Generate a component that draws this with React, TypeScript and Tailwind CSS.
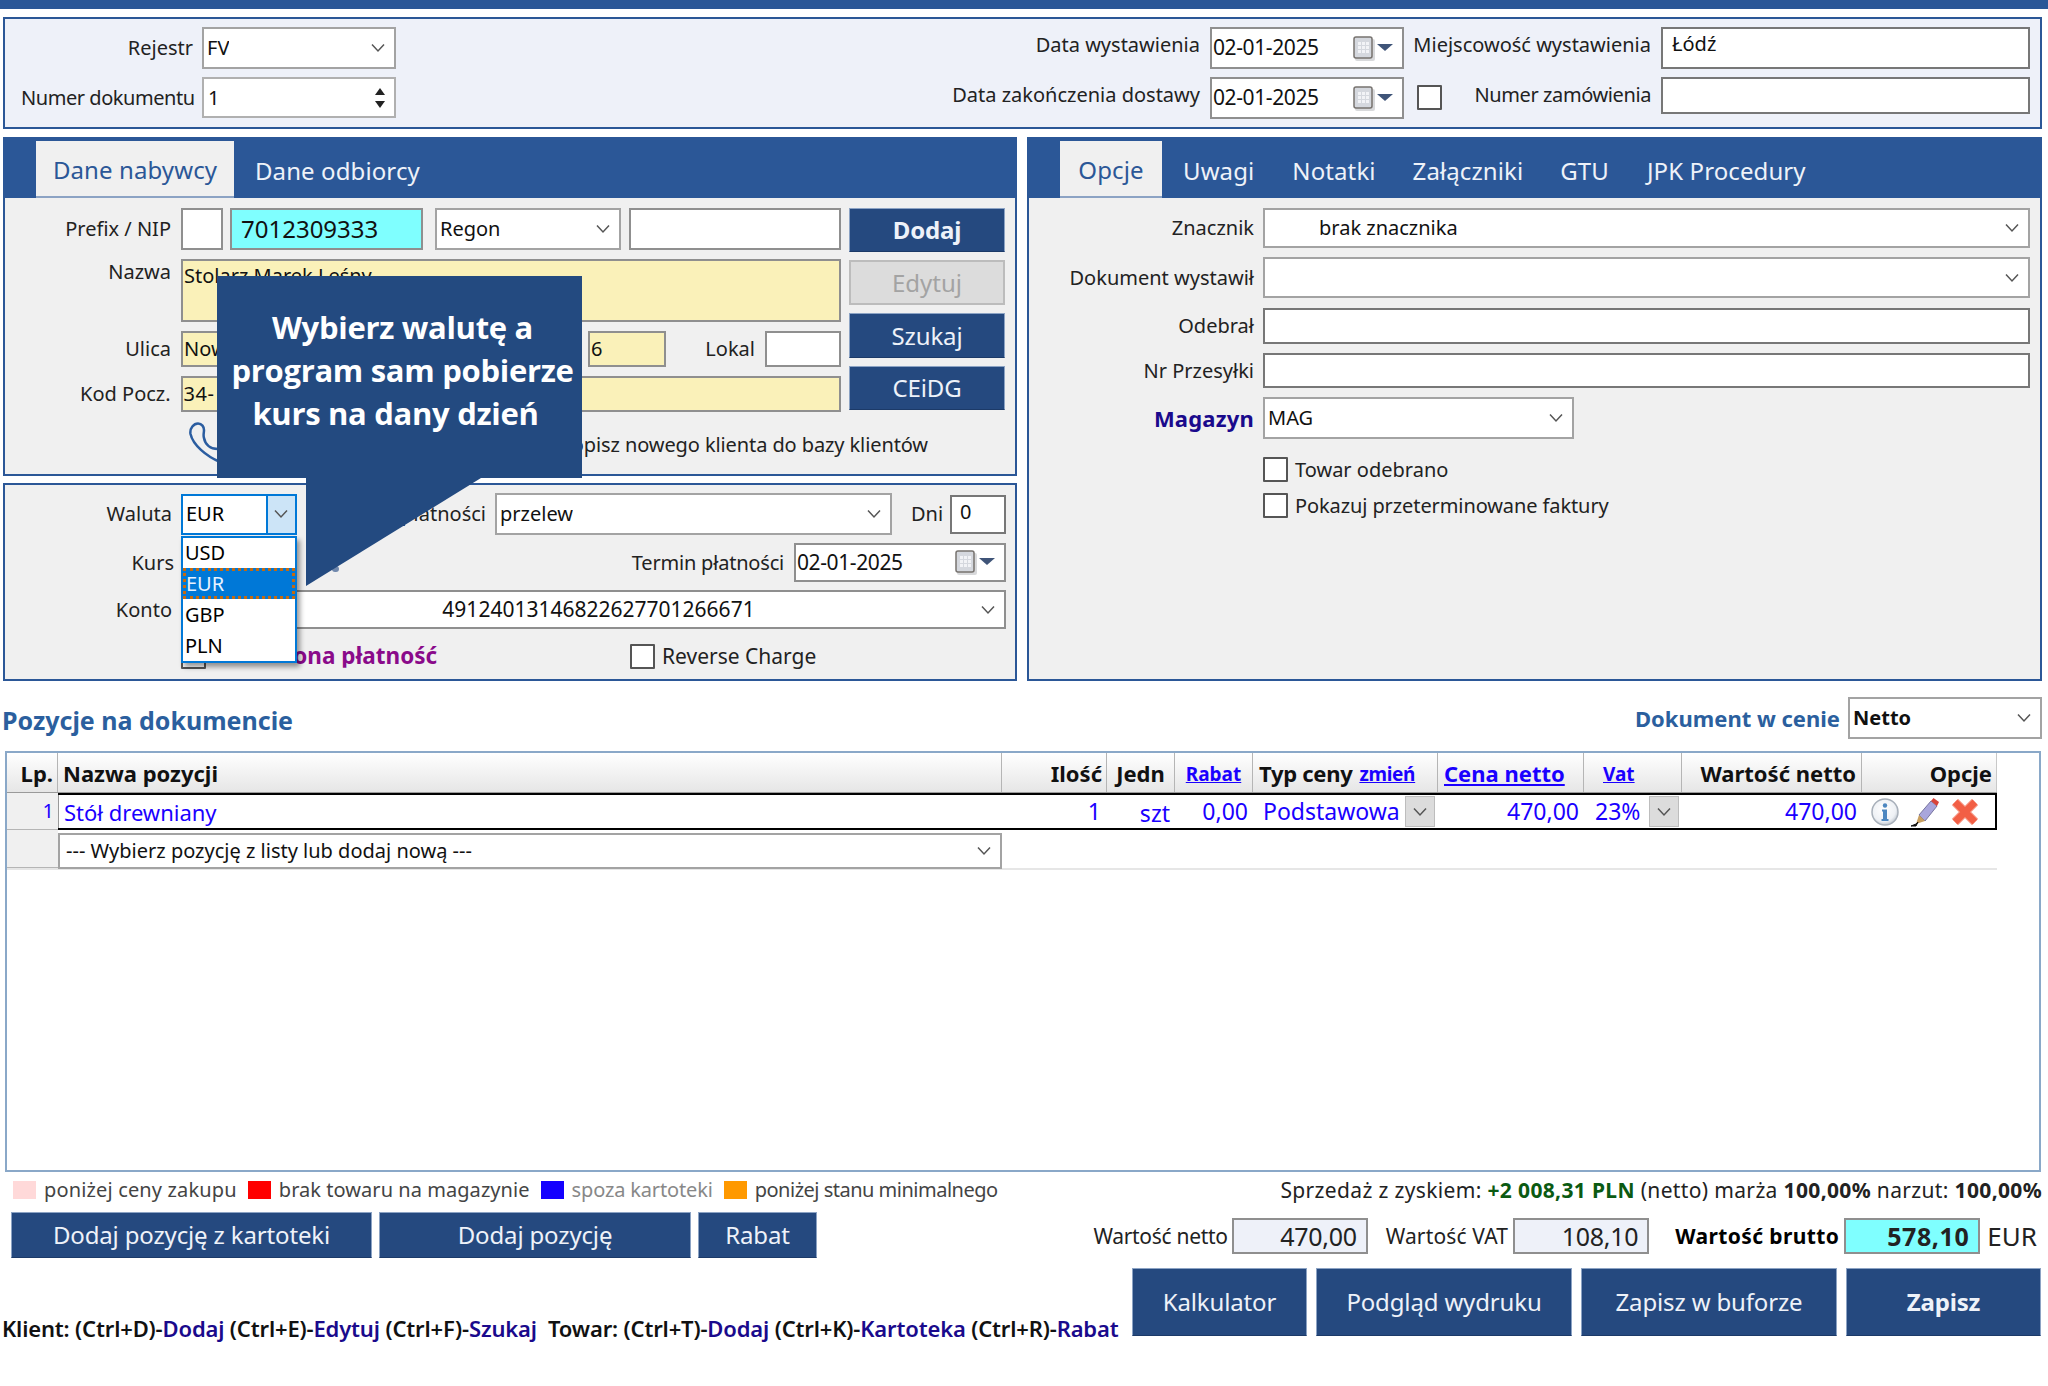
import type { ReactNode } from "react";

const labelCls = "text-[20px] leading-none text-[#222] text-right whitespace-nowrap";
const boxCls = "border-2 border-[#8f8f8f] bg-white flex items-center text-[20px] text-[#111] whitespace-nowrap overflow-hidden";
const btnCls = "bg-[#25497f] border border-[#8ca3c4] border-b-[#1c3a68] text-[#eef2f9] flex items-center justify-center text-[24px] tracking-[-0.15px] whitespace-nowrap";

function Chevron({ className = "" }: { className?: string }) {
  return (
    <svg width="16" height="10" viewBox="0 0 16 10" className={className} fill="none" stroke="#555" strokeWidth="1.5">
      <path d="M2 1.5 L8 8 L14 1.5" />
    </svg>
  );
}

function CalendarIcon() {
  return (
    <svg width="40" height="25" viewBox="0 0 40 25" className="shrink-0">
      <rect x="2" y="3" width="20" height="22" rx="2" fill="#8f9298" opacity="0.35" />
      <rect x="1" y="1" width="18" height="21" rx="2" fill="#d5d8de" stroke="#77736f" strokeWidth="1.5" />
      <path d="M5 6h3v3H5zM9 6h3v3H9zM13 6h3v3h-3zM5 10h3v3H5zM9 10h3v3H9zM13 10h3v3h-3zM5 14h3v3H5zM9 14h3v3H9zM13 14h3v3h-3z" fill="#f2f3f6" />
      <path d="M24 8h16l-8 7z" fill="#3f5478" />
    </svg>
  );
}

function PhoneIcon() {
  return (
    <svg width="36" height="42" viewBox="0 0 36 42" fill="none" stroke="#2b5da0" strokeWidth="2.5" className="shrink-0">
      <path d="M31 40 C17 34 4 23 1.500 12 C0.500 6 5 1.500 9 1.500 C13 1.500 15 5 15 8 C15 11 14 13 15 16 C16 22 21 28 31 27" />
    </svg>
  );
}

function Select({ className, children }: { className: string; children?: ReactNode }) {
  return (
    <div className={`${boxCls} border-[#a3a3a3] justify-between pl-[3px] pr-[8px] ${className}`}>
      <span className="truncate">{children}</span>
      <Chevron className="shrink-0" />
    </div>
  );
}

function DateInput({ className }: { className: string }) {
  return (
    <div className={`${boxCls} justify-between pl-[1px] pr-[9px] ${className}`}>
      <span className="text-[21px] tracking-[-0.4px]">02-01-2025</span>
      <CalendarIcon />
    </div>
  );
}

function Check({ className = "" }: { className?: string }) {
  return <div className={`w-[25px] h-[25px] border-2 border-[#555] bg-white rounded-[1px] shrink-0 ${className}`} />;
}

function TabBar({ tabs }: { tabs: { name: string; className: string }[] }) {
  return (
    <div className="h-[59px] bg-[#2b5797] flex items-end pl-[31px] text-[24px] tracking-[0.1px] leading-none">
      {tabs.map((tab, i) => (
        <div
          key={tab.name}
          className={`h-[57px] flex items-center pt-[2px] whitespace-nowrap ${
            i === 0 ? "bg-[#f0f0f0] text-[#2b5797] justify-center border-b-2 border-b-[#8ca3c4]" : "text-[#eef2f9]"
          } ${tab.className}`}
        >
          {tab.name}
        </div>
      ))}
    </div>
  );
}

function TopPanel() {
  return (
    <div className="ml-[3px] mt-[8px] w-[2039px] h-[112px] border-2 border-[#2b5797] bg-[#eef1f9] flex justify-between pt-[8px] pl-[16px] pr-[10px]">
      <div className="flex flex-col gap-[8px]">
        <div className="flex items-center gap-[9px]">
          <div className={`${labelCls} w-[172px]`}>Rejestr</div>
          <Select className="w-[194px] h-[42px]">FV</Select>
        </div>
        <div className="flex items-center gap-[9px]">
          <div className={`${labelCls} w-[172px] tracking-[-0.45px]`}>Numer dokumentu</div>
          <div className={`${boxCls} border-[#b0b0b0] w-[194px] h-[41px] justify-between pl-[4px] pr-[9px]`}>
            <span>1</span>
            <div className="flex flex-col gap-[6px]">
              <div className="w-0 h-0 border-x-[5px] border-x-transparent border-b-[7px] border-b-[#222]" />
              <div className="w-0 h-0 border-x-[5px] border-x-transparent border-t-[7px] border-t-[#222]" />
            </div>
          </div>
        </div>
      </div>
      <div className="flex flex-col gap-[8px]">
        <div className="flex items-start">
          <div className={`${labelCls} pt-[8px] w-[250px]`}>Data wystawienia</div>
          <DateInput className="w-[194px] h-[42px] ml-[10px]" />
          <div className={`${labelCls} pt-[8px] w-[247px]`}>Miejscowość wystawienia</div>
          <div className={`${boxCls} border-[#777] w-[369px] h-[42px] ml-[10px] !items-start pl-[9px]`}>Łódź</div>
        </div>
        <div className="flex items-start">
          <div className={`${labelCls} pt-[8px] w-[250px]`}>Data zakończenia dostawy</div>
          <DateInput className="w-[194px] h-[42px] ml-[10px]" />
          <Check className="ml-[13px] mt-[8px]" />
          <div className={`${labelCls} pt-[8px] w-[209px] tracking-[-0.4px]`}>Numer zamówienia</div>
          <div className={`${boxCls} border-[#777] w-[369px] h-[37px] ml-[10px]`} />
        </div>
      </div>
    </div>
  );
}

function BuyerPanel() {
  return (
    <div className="h-[339px] border-2 border-[#2b5797] bg-[#f0f0f0]">
      <TabBar
        tabs={[
          { name: "Dane nabywcy", className: "w-[198px]" },
          { name: "Dane odbiorcy", className: "ml-[21px]" },
        ]}
      />
      <div className="flex pt-[10px]">
        <div className="w-[836px] flex flex-col">
          <div className="flex items-center">
            <div className={`${labelCls} w-[166px]`}>Prefix / NIP</div>
            <div className={`${boxCls} ml-[10px] w-[42px] h-[42px]`} />
            <div className={`${boxCls} ml-[7px] w-[193px] h-[42px] !bg-[#7fffff] pl-[9px] !text-[24px]`}>7012309333</div>
            <Select className="ml-[12px] w-[186px] h-[42px]">Regon</Select>
            <div className={`${boxCls} ml-[8px] w-[212px] h-[42px]`} />
          </div>
          <div className="flex mt-[9px]">
            <div className={`${labelCls} w-[166px] pt-[3px]`}>Nazwa</div>
            <div className={`${boxCls} ml-[10px] w-[660px] h-[63px] !bg-[#faf1b9] !items-start pl-[1px]`}>Stolarz Marek Leśny</div>
          </div>
          <div className="flex items-center mt-[9px]">
            <div className={`${labelCls} w-[166px]`}>Ulica</div>
            <div className={`${boxCls} ml-[10px] w-[380px] h-[36px] !bg-[#faf1b9] pl-[1px]`}>Nowa</div>
            <div className={`${boxCls} ml-[27px] w-[78px] h-[36px] !bg-[#faf1b9] pl-[1px]`}>6</div>
            <div className={`${labelCls} w-[89px]`}>Lokal</div>
            <div className={`${boxCls} ml-[10px] w-[76px] h-[36px]`} />
          </div>
          <div className="flex items-center mt-[9px]">
            <div className={`${labelCls} w-[166px]`}>Kod Pocz.</div>
            <div className={`${boxCls} ml-[10px] w-[80px] h-[36px] !bg-[#faf1b9] pl-[1px] tracking-[0.5px]`}>34-</div>
            <div className={`${boxCls} ml-[8px] w-[574px] h-[36px] !bg-[#faf1b9]`} />
          </div>
        </div>
        <div className="ml-[8px] w-[156px] flex flex-col gap-[8px]">
          <div className={`${btnCls} h-[44px] font-bold`}>Dodaj</div>
          <div className="h-[45px] bg-[#dcdcdc] border-2 border-[#bcbcbc] text-[#a3a3a3] flex items-center justify-center text-[24px]">Edytuj</div>
          <div className={`${btnCls} h-[45px]`}>Szukaj</div>
          <div className={`${btnCls} h-[44px]`}>CEiDG</div>
        </div>
      </div>
      <div className="flex items-center mt-[10px] ml-[184px]">
        <PhoneIcon />
        <div className={`${labelCls} w-[703px] tracking-[-0.1px] pt-[3px]`}>Dopisz nowego klienta do bazy klientów</div>
      </div>
    </div>
  );
}

function PaymentPanel() {
  return (
    <div className="relative mt-[7px] h-[198px] border-2 border-[#2b5797] bg-[#f0f0f0] pt-[8px]">
      <div className="absolute left-[327px] top-[81px] w-[7px] h-[6px] rounded-full bg-[#7189ad]" />
      <div className="flex items-center">
        <div className={`${labelCls} w-[167px]`}>Waluta</div>
        <div className="ml-[9px] w-[116px] h-[41px] border-2 border-[#0078d7] bg-white flex items-center text-[20px] pl-[3px]">
          <span className="w-[82px]">EUR</span>
          <div className="w-[30px] h-full bg-[#cce4f7] border-l-2 border-l-[#0078d7] flex items-center justify-center">
            <Chevron />
          </div>
        </div>
        <div className={`${labelCls} w-[189px]`}>Forma płatności</div>
        <Select className="ml-[9px] w-[397px] h-[42px]">przelew</Select>
        <div className={`${labelCls} ml-[19px] w-[32px]`}>Dni</div>
        <div className={`${boxCls} ml-[7px] w-[56px] h-[39px] pl-[8px] !items-start border-[#777]`}>0</div>
      </div>
      <div className="flex items-center mt-[8px]">
        <div className={`${labelCls} w-[169px]`}>Kurs</div>
        <div className={`${labelCls} w-[610px] tracking-[-0.2px]`}>Termin płatności</div>
        <DateInput className="ml-[10px] w-[212px] h-[39px]" />
      </div>
      <div className="flex items-center mt-[8px]">
        <div className={`${labelCls} w-[167px]`}>Konto</div>
        <div className={`${boxCls} ml-[9px] w-[825px] h-[39px] border-[#8f8f8f] justify-between pr-[8px]`}>
          <span className="flex-1 text-center pl-[34px] text-[21px]">49124013146822627701266671</span>
          <Chevron />
        </div>
      </div>
      <div className="flex items-center mt-[15px] ml-[176px]">
        <Check />
        <div className="ml-[7px] w-[417px] text-[22.5px] font-bold text-[#8a0a8a] leading-none whitespace-nowrap [clip-path:inset(0_0_0_84px)]">Podzielona płatność</div>
        <Check />
        <div className="ml-[7px] text-[21px] leading-none text-[#222]">Reverse Charge</div>
      </div>
    </div>
  );
}

function OptionsPanel() {
  const rowLabel = `${labelCls} w-[225px]`;
  return (
    <div className="w-[1015px] h-[544px] border-2 border-[#2b5797] bg-[#f0f0f0]">
      <TabBar
        tabs={[
          { name: "Opcje", className: "w-[102px]" },
          { name: "Uwagi", className: "ml-[21px]" },
          { name: "Notatki", className: "ml-[38px]" },
          { name: "Załączniki", className: "ml-[37px]" },
          { name: "GTU", className: "ml-[37px]" },
          { name: "JPK Procedury", className: "ml-[38px]" },
        ]}
      />
      <div className="flex flex-col pt-[10px]">
        <div className="flex items-center gap-[9px]">
          <div className={rowLabel}>Znacznik</div>
          <Select className="w-[767px] h-[40px] !pl-[54px]">brak znacznika</Select>
        </div>
        <div className="flex items-center gap-[9px] mt-[9px]">
          <div className={rowLabel}>Dokument wystawił</div>
          <Select className="w-[767px] h-[41px]" />
        </div>
        <div className="flex items-center gap-[9px] mt-[10px]">
          <div className={rowLabel}>Odebrał</div>
          <div className={`${boxCls} border-[#777] w-[767px] h-[36px]`} />
        </div>
        <div className="flex items-center gap-[9px] mt-[9px]">
          <div className={rowLabel}>Nr Przesyłki</div>
          <div className={`${boxCls} border-[#777] w-[767px] h-[35px]`} />
        </div>
        <div className="flex items-center gap-[9px] mt-[9px]">
          <div className={`${rowLabel} !text-[22px] tracking-[0.2px] font-bold !text-[#1a0a8c]`}>Magazyn</div>
          <Select className="w-[311px] h-[42px]">MAG</Select>
        </div>
        <div className="flex items-center ml-[234px] mt-[18px] gap-[7px] text-[20px] leading-none text-[#222]">
          <Check />
          Towar odebrano
        </div>
        <div className="flex items-center ml-[234px] mt-[11px] gap-[7px] text-[20px] leading-none text-[#222] tracking-[-0.1px]">
          <Check />
          Pokazuj przeterminowane faktury
        </div>
      </div>
    </div>
  );
}

function Callout() {
  return (
    <div className="absolute left-[217px] top-[276px] w-[365px] h-[202px] bg-[#234a80] text-white z-10">
      <div className="pt-[30px] pl-[6px] text-center text-[31px] leading-[43px] font-bold font-['Open_Sans',sans-serif] tracking-[-0.3px]">
        <div>Wybierz walutę a</div>
        <div>program sam pobierze</div>
        <div className="pr-[14px]">kurs na dany dzień</div>
      </div>
      <svg className="absolute left-[89px] top-[202px]" width="175" height="108" viewBox="0 0 175 108">
        <path d="M0 0 H175 L0 108 Z" fill="#234a80" />
      </svg>
    </div>
  );
}

function CurrencyMenu() {
  return (
    <div className="absolute left-[181px] top-[536px] w-[116px] h-[127px] border-2 border-[#0078d7] bg-white z-10 text-[20px] leading-none shadow-[3px_4px_5px_rgba(0,0,0,0.4)]">
      <div className="h-[30px] flex items-center pl-[2px]">USD</div>
      <div className="h-[31px] flex items-center pl-0 bg-[#0078d7] text-[#e8f2ff] border-[3px] border-dotted border-[#c46a10]">EUR</div>
      <div className="h-[31px] flex items-center pl-[2px]">GBP</div>
      <div className="h-[31px] flex items-center pl-[2px]">PLN</div>
    </div>
  );
}

function InfoIcon() {
  return (
    <svg width="28" height="28" viewBox="0 0 28 28" className="shrink-0">
      <defs>
        <radialGradient id="info-bg" cx="0.45" cy="0.4" r="0.65">
          <stop offset="0" stopColor="#ffffff" />
          <stop offset="0.7" stopColor="#eef1f5" />
          <stop offset="1" stopColor="#b4bcc6" />
        </radialGradient>
      </defs>
      <circle cx="14" cy="14" r="13" fill="url(#info-bg)" stroke="#a8b0ba" strokeWidth="1.5" />
      <circle cx="14" cy="7.5" r="2.2" fill="#4d87c0" />
      <path d="M11 11.5h5v9.500h1.500v2h-7v-2h1.500v-7.500h-1z" fill="#4d87c0" />
    </svg>
  );
}

function PencilIcon() {
  return (
    <svg width="30" height="30" viewBox="0 0 30 30" className="shrink-0">
      <path d="M9 18 L21 4 L27 9 L15 24 Z" fill="#a9a6dc" stroke="#77749f" strokeWidth="1" />
      <path d="M21 4 L23.500 1 L29 5 L27 9 Z" fill="#d8433a" />
      <path d="M9 18 L15 24 L6 27 Z" fill="#c9a060" />
      <path d="M1 29 H6 L8 25 L6 27 Z" fill="#111" stroke="#111" strokeWidth="1" />
    </svg>
  );
}

function CrossIcon() {
  return (
    <svg width="28" height="26" viewBox="0 0 28 26" fill="none" className="shrink-0">
      <path d="M4 3 L24 23 M24 3 L4 23" stroke="#f8a493" strokeWidth="9" />
      <path d="M4 3 L24 23 M24 3 L4 23" stroke="#f25f45" strokeWidth="7" />
    </svg>
  );
}

function Cell({ className, children }: { className: string; children?: ReactNode }) {
  return <div className={`h-full shrink-0 flex items-center whitespace-nowrap overflow-hidden ${className}`}>{children}</div>;
}

function ItemsTable() {
  const head = "border-r border-r-[#b5b5b5] font-bold text-[22px] text-[#111]";
  const link = "text-[#1a00ff] underline font-bold";
  const val = "text-[#1a00ff] text-[23px]";
  return (
    <div className="ml-[5px] mt-[12px] w-[2036px] h-[421px] border-2 border-[#8aa8c8] bg-white">
      <div className="flex h-[40px] w-[1990px] bg-gradient-to-b from-white to-[#e6e6e6] border-b border-b-[#9a9a9a] leading-none">
        <Cell className={`${head} w-[51px] justify-end pr-[4px]`}>Lp.</Cell>
        <Cell className={`${head} w-[944px] pl-[5px]`}>Nazwa pozycji</Cell>
        <Cell className={`${head} w-[105px] justify-end pr-[4px]`}>Ilość</Cell>
        <Cell className={`${head} w-[68px] justify-center`}>Jedn</Cell>
        <Cell className={`${head} w-[78px] justify-center !font-normal`}><span className={`${link} text-[19px] mt-[3px]`}>Rabat</span></Cell>
        <Cell className={`${head} w-[185px] pl-[6px] gap-[7px] tracking-[-0.3px]`}>Typ ceny <span className={`${link} text-[19px] mt-[3px]`}>zmień</span></Cell>
        <Cell className={`${head} w-[146px] pl-[6px]`}><span className={`${link} text-[22px]`}>Cena netto</span></Cell>
        <Cell className={`${head} w-[98px] pl-[19px]`}><span className={`${link} text-[19px] mt-[3px]`}>Vat</span></Cell>
        <Cell className={`${head} w-[180px] justify-end pr-[5px]`}>Wartość netto</Cell>
        <Cell className={`${head} w-[135px] justify-end pr-[4px] !border-r-[#c8c8c8]`}>Opcje</Cell>
      </div>
      <div className="flex h-[37px] w-[1990px]">
        <Cell className="w-[51px] justify-end pr-[4px] bg-[#f0f0f0] border-b border-b-[#b5b5b5] text-[#1a00ff] text-[20px]">1</Cell>
        <div className="flex flex-1 h-full border-y-2 border-y-black border-r-2 border-r-black leading-none">
          <Cell className={`${val} !text-[22px] w-[944px] pl-[5px] border-l border-l-[#999]`}>Stół drewniany</Cell>
          <Cell className={`${val} w-[105px] justify-end pr-[6px]`}>1</Cell>
          <Cell className={`${val} w-[68px] justify-end pr-[5px] pt-[4px]`}>szt</Cell>
          <Cell className={`${val} w-[78px] justify-end pr-[5px]`}>0,00</Cell>
          <Cell className={`${val} w-[185px] pl-[10px] justify-between pr-[3px]`}>
            Podstawowa
            <div className="w-[30px] h-[31px] bg-[#dcdcdc] border border-[#bdbdbd] flex items-center justify-center"><Chevron /></div>
          </Cell>
          <Cell className={`${val} w-[146px] justify-end pr-[5px]`}>470,00</Cell>
          <Cell className={`${val} w-[98px] pl-[11px] justify-between pr-[3px]`}>
            23%
            <div className="w-[30px] h-[31px] bg-[#dcdcdc] border border-[#bdbdbd] flex items-center justify-center"><Chevron /></div>
          </Cell>
          <Cell className={`${val} w-[180px] justify-end pr-[5px]`}>470,00</Cell>
          <Cell className="flex-1 gap-[11px] pl-[9px]">
            <InfoIcon />
            <PencilIcon />
            <CrossIcon />
          </Cell>
        </div>
      </div>
      <div className="flex h-[40px] w-[1990px] border-b-2 border-b-[#e6e6e6]">
        <Cell className="w-[51px] bg-[#f0f0f0] border-b border-b-[#b5b5b5]" />
        <Select className="w-[944px] h-[36px] mt-[3px] !pl-[6px]">--- Wybierz pozycję z listy lub dodaj nową ---</Select>
      </div>
    </div>
  );
}

function Legend() {
  const items = [
    { swatch: "bg-[#ffd9d9]", text: "text-[#444] tracking-[0.15px]", label: "poniżej ceny zakupu" },
    { swatch: "bg-[#ff0000]", text: "text-[#444] tracking-[0.05px]", label: "brak towaru na magazynie" },
    { swatch: "bg-[#1400ff]", text: "text-[#888] tracking-[-0.15px]", label: "spoza kartoteki" },
    { swatch: "bg-[#ff9900]", text: "text-[#444] tracking-[-0.5px]", label: "poniżej stanu minimalnego" },
  ];
  return (
    <div className="flex items-center ml-[13px] gap-[11px] text-[20px] leading-none">
      {items.map((item) => (
        <div key={item.label} className="flex items-center gap-[8px]">
          <div className={`w-[23px] h-[18px] ${item.swatch}`} />
          <span className={item.text}>{item.label}</span>
        </div>
      ))}
    </div>
  );
}

function Footer() {
  const total = "border-2 border-[#8f8f8f] h-[36px] w-[136px] shrink-0 flex items-center justify-end pr-[9px] text-[25px] tracking-[-0.3px] text-[#222]";
  const big = `${btnCls} h-[68px]`;
  const key = "text-[#1a0a8c]";
  return (
    <>
      <div className="flex items-center justify-between mt-[8px] pr-[6px] h-[20px]">
        <Legend />
        <div className="text-[21px] leading-none text-[#222] whitespace-nowrap tracking-[0.35px]">
          Sprzedaż z zyskiem: <b className="text-[#0b5a12]">+2 008,31 PLN</b> (netto) marża <b>100,00%</b> narzut: <b>100,00%</b>
        </div>
      </div>
      <div className="flex mt-[12px]">
        <div className="flex gap-[7px] ml-[11px] h-[46px]">
          <div className={`${btnCls} w-[361px]`}>Dodaj pozycję z kartoteki</div>
          <div className={`${btnCls} w-[312px]`}>Dodaj pozycję</div>
          <div className={`${btnCls} w-[119px]`}>Rabat</div>
        </div>
        <div className="ml-auto pr-[11px] pt-[6px] flex items-center h-[42px] text-[21px] leading-none text-[#222]">
          <span className="tracking-[-0.3px]">Wartość netto</span>
          <div className={`${total} ml-[4px] bg-[#eef1f9]`}>470,00</div>
          <span className="ml-[18px] tracking-[0.15px]">Wartość VAT</span>
          <div className={`${total} ml-[5px] bg-[#eef1f9]`}>108,10</div>
          <span className="ml-[26px] font-bold text-black tracking-[0.4px]">Wartość brutto</span>
          <div className={`${total} ml-[5px] bg-[#7fffff] font-bold !tracking-[0.6px]`}>578,10</div>
          <span className="ml-[7px] text-[26px]">EUR</span>
        </div>
      </div>
      <div className="flex items-end mt-[10px]">
        <div className="pl-[2px] -mb-[3px] w-[1132px] whitespace-nowrap text-[22px] leading-none font-semibold text-[#111] tracking-[-0.15px]">
          Klient: (Ctrl+D)-<span className={key}>Dodaj</span> (Ctrl+E)-<span className={key}>Edytuj</span> (Ctrl+F)-<span className={key}>Szukaj</span>{"\u00a0\u00a0"}Towar: (Ctrl+T)-<span className={key}>Dodaj</span> (Ctrl+K)-<span className={key}>Kartoteka</span> (Ctrl+R)-<span className={key}>Rabat</span>
        </div>
        <div className="flex gap-[9px]">
          <div className={`${big} w-[175px]`}>Kalkulator</div>
          <div className={`${big} w-[256px]`}>Podgląd wydruku</div>
          <div className={`${big} w-[256px]`}>Zapisz w buforze</div>
          <div className={`${big} w-[195px] font-bold`}>Zapisz</div>
        </div>
      </div>
    </>
  );
}

export default function App() {
  return (
    <div className="relative w-[2048px] h-[1386px] bg-white overflow-hidden font-['Noto_Sans',sans-serif]">
      <div className="h-[9px] bg-[#2b5797]" />
      <TopPanel />
      <div className="flex ml-[3px] mt-[8px] gap-[10px]">
        <div className="w-[1014px]">
          <BuyerPanel />
          <PaymentPanel />
        </div>
        <OptionsPanel />
      </div>
      <div className="flex items-center justify-between mt-[16px] h-[42px] pl-[2px] pr-[6px]">
        <div className="text-[25px] font-bold text-[#2b5f9e] leading-none pt-[4px]">Pozycje na dokumencie</div>
        <div className="flex items-center gap-[8px]">
          <div className="text-[22px] font-bold text-[#2b5f9e] leading-none">Dokument w cenie</div>
          <Select className="w-[194px] h-[42px] font-bold">Netto</Select>
        </div>
      </div>
      <ItemsTable />
      <Footer />
      <Callout />
      <CurrencyMenu />
    </div>
  );
}
